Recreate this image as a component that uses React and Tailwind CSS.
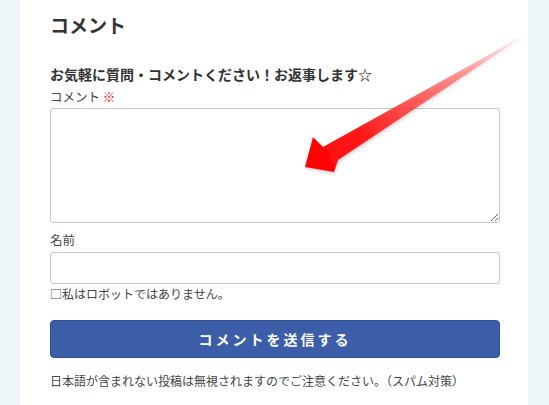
import React from 'react';

const font = { fontFamily: '"Noto Sans CJK JP", "Noto Sans", sans-serif' };

// Big red arrow pointing at the comment box
const Arrow = () => (
  <svg className="absolute left-0 top-0 pointer-events-none" width="549" height="405" viewBox="0 0 549 405">
    <defs>
      <linearGradient id="arrowGrad" x1="530" y1="32" x2="305" y2="167" gradientUnits="userSpaceOnUse">
        <stop offset="0" stopColor="#ff4d4d" stopOpacity="0.05" />
        <stop offset="0.35" stopColor="#ff3030" stopOpacity="0.55" />
        <stop offset="0.75" stopColor="#ff1010" stopOpacity="0.95" />
        <stop offset="1" stopColor="#ff0000" stopOpacity="1" />
      </linearGradient>
      <filter id="arrowShadow" x="-10%" y="-10%" width="120%" height="130%">
        <feDropShadow dx="1" dy="2" stdDeviation="1.5" floodColor="#000" floodOpacity="0.18" />
      </filter>
    </defs>
    <polygon
      points="530,32 323,147 313,137 305,167 334,172 338,160"
      fill="url(#arrowGrad)"
      filter="url(#arrowShadow)"
    />
  </svg>
);

export default function App() {
  return (
    <div className="w-[549px] h-[405px] bg-[#eef5f9] overflow-hidden" style={font}>
      <div className="relative ml-[20px] w-[508px] h-full bg-white pl-[30px] pr-[28px]">
        <h2 className="mt-0 pt-[12px] text-[19px] leading-[26px] font-bold text-[#333]">コメント</h2>

        <p className="mt-[26px] text-[14px] leading-[20px] font-bold text-[#333]">
          お気軽に質問・コメントください！お返事します☆
        </p>

        <label className="block mt-[4px] text-[12.5px] leading-[18px] text-[#444]">
          コメント <span className="text-[#e02020]">※</span>
        </label>
        <textarea className="block mt-[2px] w-[450px] h-[115px] border border-[#c8c8c8] rounded-[3px] bg-white" />

        <label className="block mt-[8px] text-[12.5px] leading-[18px] text-[#444]">名前</label>
        <input type="text" className="block mt-[3px] w-[450px] h-[32px] border border-[#c8c8c8] rounded-[3px] bg-white" />

        <p className="mt-[1px] text-[12px] leading-[18px] text-[#444]">□私はロボットではありません。</p>

        <button className="mt-[17px] w-[450px] h-[38px] rounded-[4px] bg-[#3c5ea9] border border-[#2f4f95] text-white text-[14px] font-bold tracking-[3px]">
          コメントを送信する
        </button>

        <p className="mt-[14px] text-[12px] leading-[18px] text-[#444]">
          日本語が含まれない投稿は無視されますのでご注意ください。（スパム対策）
        </p>
      </div>
      <Arrow />
    </div>
  );
}
